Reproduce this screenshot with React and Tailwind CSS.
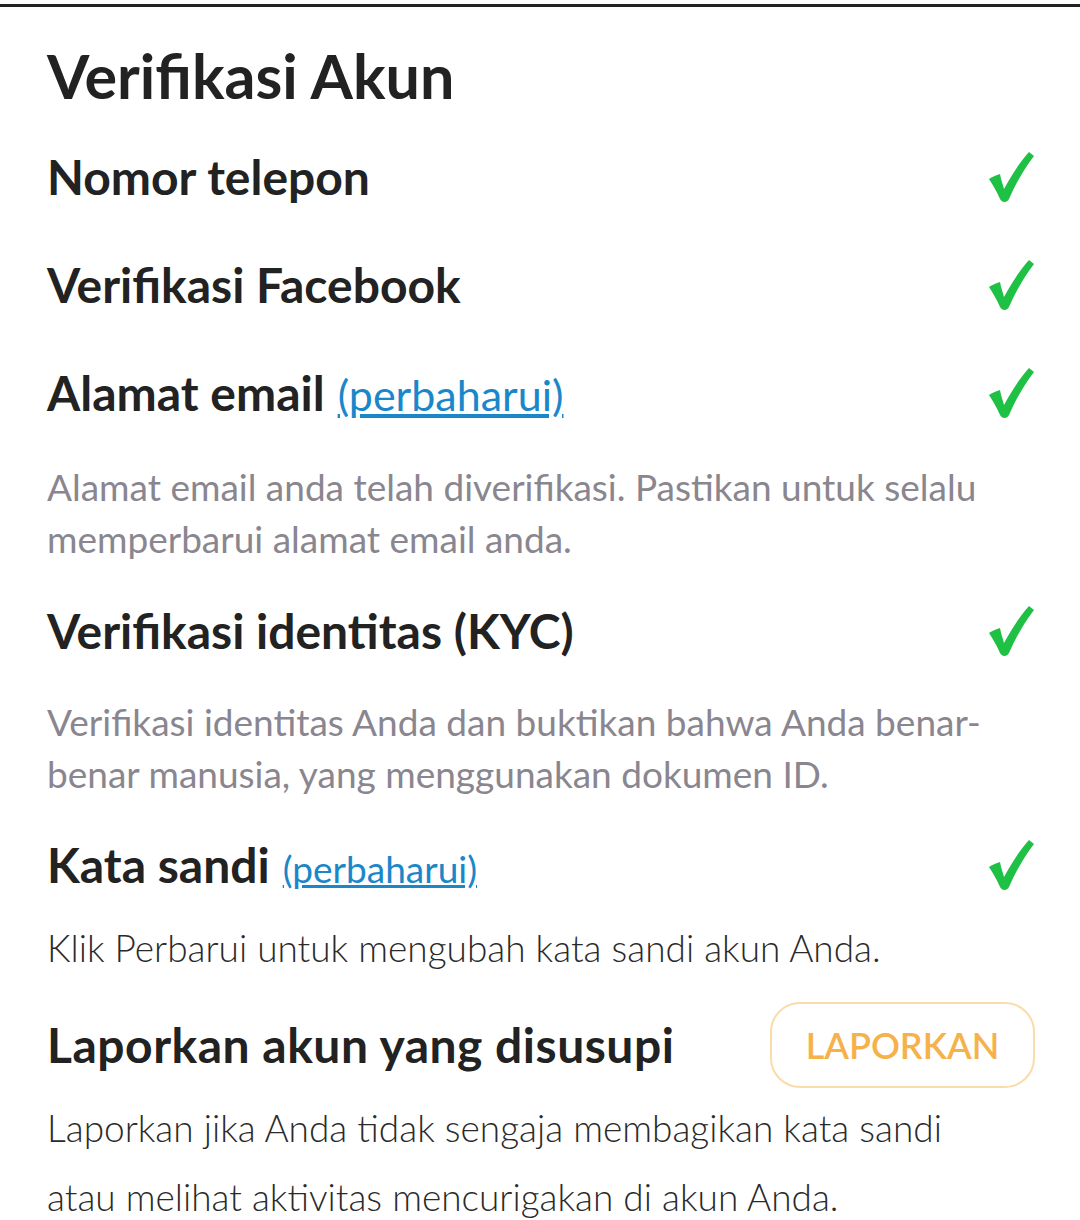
import React from 'react';

function Check() {
  return (
    <svg width="48" height="54" viewBox="0 0 48 54" className="shrink-0">
      <path
        d="M2 29 C5 27 9 25 13 24 C14 30 16 35 17 39 C24 26 32 13 42 2 L47 6 C37 19 29 33 22 49 C20 53 15 53 13 49 C10 42 6 35 2 29 Z"
        fill="#1ec144"
      />
    </svg>
  );
}

function Row({ children, className = '' }) {
  return (
    <div className={`flex items-center justify-between h-[108px] ${className}`}>
      <div className="text-[48px] font-bold text-[#222] flex items-baseline gap-[13px]">{children}</div>
      <Check />
    </div>
  );
}

export default function App() {
  return (
    <div className="bg-white w-[1080px] h-[1220px] overflow-hidden pt-[4px]" style={{ fontFamily: 'Lato, "Noto Sans", sans-serif' }}>
      <div className="h-[3px] bg-[#222]" />
      <div className="pl-[47px] pr-[45px]">
        <h1 className="mt-[35px] text-[61px] leading-[1.1] font-bold text-[#222]">Verifikasi Akun</h1>

        <Row className="mt-[14px]">Nomor telepon</Row>
        <Row>Verifikasi Facebook</Row>
        <Row>
          <span>Alamat email</span>
          <a href="#" className="text-[43px] font-normal text-[#1b87c9] underline">(perbaharui)</a>
        </Row>
        <p className="mt-[14px] text-[37px] leading-[52px] text-[#8a8690]">
          Alamat email anda telah diverifikasi. Pastikan untuk selalu memperbarui alamat email anda.
        </p>

        <Row className="mt-[12px]">Verifikasi identitas (KYC)</Row>
        <p className="mt-[11px] text-[37px] leading-[52px] text-[#8a8690] pr-[50px]">
          Verifikasi identitas Anda dan buktikan bahwa Anda benar-benar manusia, yang menggunakan dokumen ID.
        </p>

        <Row className="mt-[11px]">
          <span>Kata sandi</span>
          <a href="#" className="text-[37px] font-normal text-[#1b87c9] underline">(perbaharui)</a>
        </Row>
        <p className="mt-[3px] text-[37px] leading-[52px] font-light text-[#2a2a2a]">
          Klik Perbarui untuk mengubah kata sandi akun Anda.
        </p>

        <div className="mt-[23px] flex items-center justify-between h-[96px]">
          <div className="text-[48px] font-bold text-[#222] tracking-[0.5px]">Laporkan akun yang disusupi</div>
          <button className="w-[265px] h-[86px] rounded-[30px] border-2 border-[#fbdca8] text-[36px] font-semibold text-[#f6b24a]">
            LAPORKAN
          </button>
        </div>
        <p className="text-[37px] leading-[69px] font-light text-[#2a2a2a] pr-[60px]">
          Laporkan jika Anda tidak sengaja membagikan kata sandi atau melihat aktivitas mencurigakan di akun Anda.
        </p>
      </div>
    </div>
  );
}
